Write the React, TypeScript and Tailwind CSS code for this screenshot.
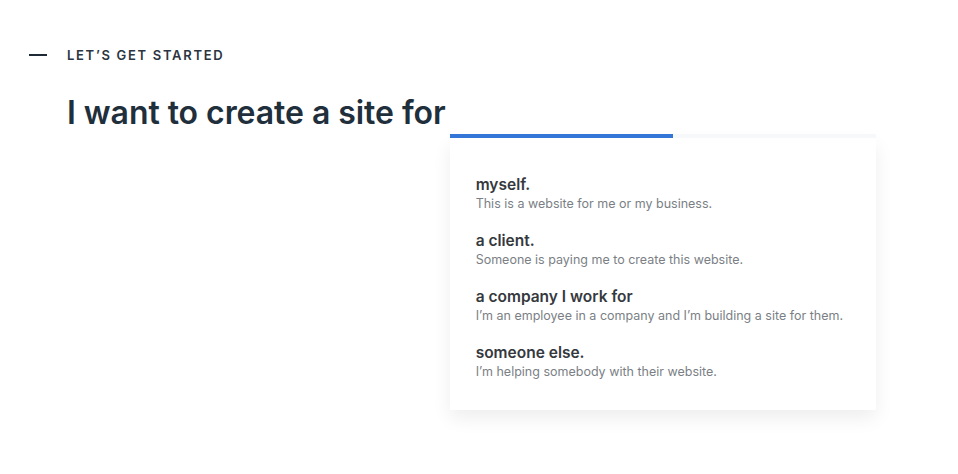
import React from "react";

const options = [
  { title: "myself.", desc: "This is a website for me or my business." },
  { title: "a client.", desc: "Someone is paying me to create this website." },
  { title: "a company I work for", desc: "I\u2019m an employee in a company and I\u2019m building a site for them." },
  { title: "someone else.", desc: "I\u2019m helping somebody with their website." },
];

export default function App() {
  return (
    <div className="w-[958px] h-[474px] bg-white overflow-hidden font-['Inter','Noto_Sans',sans-serif]">
      {/* eyebrow */}
      <div className="flex items-center pt-[47px] pl-[29px]">
        <div className="w-[18px] h-[2px] bg-[#1e2a35]" />
        <span className="ml-[20px] text-[13px] leading-[16px] font-semibold tracking-[1.7px] text-[#2b3541]">
          LET&rsquo;S GET STARTED
        </span>
      </div>

      <div className="flex items-start pl-[67px] mt-[30px]">
        <h1 className="text-[32px] leading-[40px] font-semibold tracking-[-0.05px] text-[#1f2f3c] whitespace-nowrap">
          I want to create a site for
        </h1>

        <div className="ml-[4px] mt-[41px] w-[426px]">
          {/* input underline */}
          <div className="flex h-[4px]">
            <div className="w-[223px] bg-[#3476d8]" />
            <div className="flex-1 bg-[#f7f8f9]" />
          </div>

          {/* dropdown */}
          <div className="bg-white shadow-[0_8px_18px_rgba(0,0,0,0.07)] pt-[37px] pb-[30px] pl-[26px] pr-4 flex flex-col gap-[19px]">
            {options.map((o) => (
              <div key={o.title} className="flex flex-col">
                <span className="text-[15.5px] leading-[20px] font-semibold text-[#35393e]">{o.title}</span>
                <span className="text-[12.5px] leading-[17px] text-[#7b7f85]">{o.desc}</span>
              </div>
            ))}
          </div>
        </div>
      </div>
    </div>
  );
}
